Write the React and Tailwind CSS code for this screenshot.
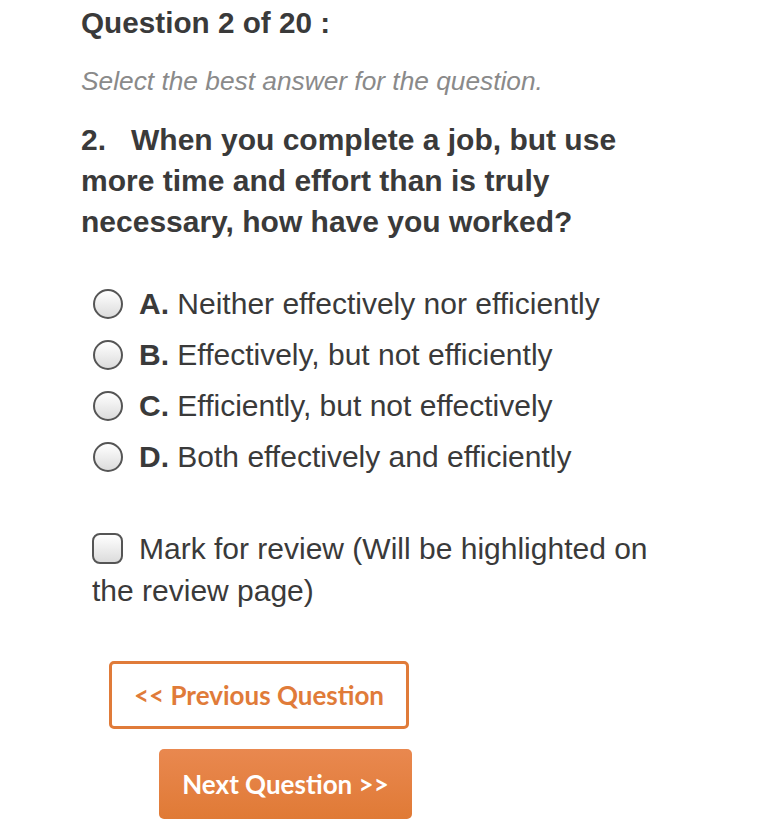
export default function App() {
  const opts = [
    ["A.", "Neither effectively nor efficiently"],
    ["B.", "Effectively, but not efficiently"],
    ["C.", "Efficiently, but not effectively"],
    ["D.", "Both effectively and efficiently"],
  ];
  return (
    <div className="w-[777px] h-[829px] bg-white text-[#3a3a3a] overflow-hidden" style={{ fontFamily: '"Liberation Sans", Arial, sans-serif' }}>
      <div className="pl-[81px] pr-[40px]">
        <h1 className="text-[29.7px] font-bold leading-[46px]">Question 2 of 20 :</h1>
        <p className="mt-[17px] text-[26.3px] italic text-[#8a8a8a] leading-[36px]">Select the best answer for the question.</p>
        <p className="mt-[20px] text-[30px] font-bold leading-[41px] w-[565px]">
          2.&nbsp;&nbsp; When you complete a job, but use more time and effort than is truly necessary, how have you worked?
        </p>
        <div className="mt-[47px] pl-[12px] flex flex-col gap-[21px]">
          {opts.map(([l, t]) => (
            <div key={l} className="flex items-center h-[30px]">
              <span className="w-[30px] h-[30px] rounded-full border-2 border-[#555] bg-gradient-to-b from-white to-[#dcdcdc] shrink-0" />
              <span className="ml-[16px] text-[30px] leading-[30px] whitespace-nowrap"><b>{l}</b> {t}</span>
            </div>
          ))}
        </div>
        <p className="mt-[56px] ml-[11px] w-[575px] text-[30px] leading-[42px]">
          <span className="inline-block align-[-5px] w-[31px] h-[31px] rounded-[8px] border-2 border-[#555] bg-gradient-to-b from-white to-[#dcdcdc] mr-[16px]" />
          Mark for review (Will be highlighted on the review page)
        </p>
        <div className="mt-[49px] pl-[28px]">
          <button className="w-[300px] h-[68px] rounded-[5px] border-[3px] border-[#e07b39] bg-white text-[#e07b39] text-[26px] font-bold" style={{ fontFamily: 'Lato, "Open Sans", sans-serif' }}>
            &lt;&lt; Previous Question
          </button>
        </div>
        <div className="mt-[20px] pl-[78px]">
          <button className="w-[253px] h-[70px] rounded-[5px] bg-gradient-to-b from-[#e9884f] to-[#e07a35] text-white text-[26px] font-bold" style={{ fontFamily: 'Lato, "Open Sans", sans-serif' }}>
            Next Question &gt;&gt;
          </button>
        </div>
      </div>
    </div>
  );
}
